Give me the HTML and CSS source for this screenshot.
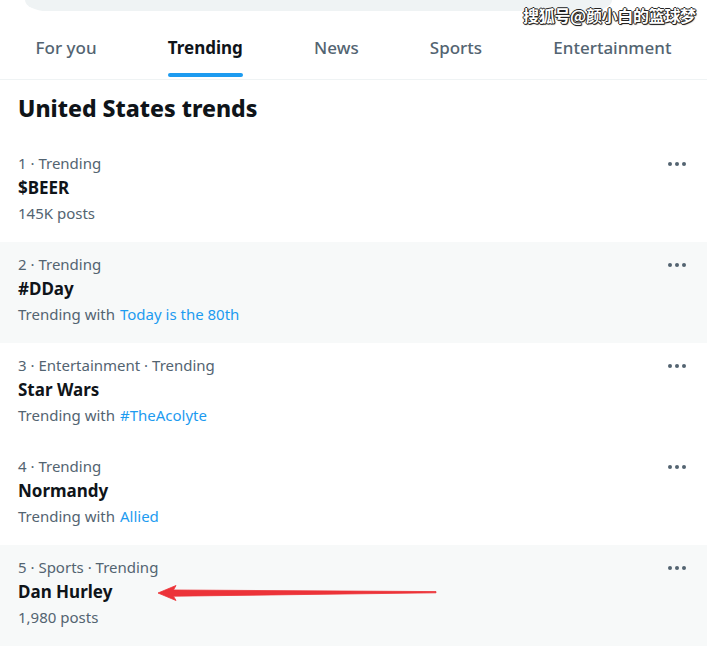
FILE: index.html
```html
<!DOCTYPE html>
<html>
<head>
<meta charset="utf-8">
<link rel="stylesheet" href="styles.css">
</head>
<body>
<div class="page">
  <div class="top">
    <div class="search"></div>
    <div class="watermark">搜狐号@颜小白的篮球梦</div>
  </div>
  <nav class="tabs">
    <div class="tab"><span>For you</span></div>
    <div class="tab active"><span>Trending</span></div>
    <div class="tab"><span>News</span></div>
    <div class="tab"><span>Sports</span></div>
    <div class="tab"><span>Entertainment</span></div>
  </nav>
  <h1 class="heading">United States trends</h1>
  <div class="trends">
    <div class="trend">
      <div class="info">
        <div class="meta">1 · Trending</div>
        <div class="title">$BEER</div>
        <div class="sub">145K posts</div>
      </div>
      <div class="more"><i></i><i></i><i></i></div>
    </div>
    <div class="trend hover">
      <div class="info">
        <div class="meta">2 · Trending</div>
        <div class="title">#DDay</div>
        <div class="sub">Trending with <a class="link">Today is the 80th</a></div>
      </div>
      <div class="more"><i></i><i></i><i></i></div>
    </div>
    <div class="trend">
      <div class="info">
        <div class="meta">3 · Entertainment · Trending</div>
        <div class="title">Star Wars</div>
        <div class="sub">Trending with <a class="link">#TheAcolyte</a></div>
      </div>
      <div class="more"><i></i><i></i><i></i></div>
    </div>
    <div class="trend">
      <div class="info">
        <div class="meta">4 · Trending</div>
        <div class="title">Normandy</div>
        <div class="sub">Trending with <a class="link">Allied</a></div>
      </div>
      <div class="more"><i></i><i></i><i></i></div>
    </div>
    <div class="trend hover last">
      <div class="info">
        <div class="meta">5 · Sports · Trending</div>
        <div class="title">Dan Hurley</div>
        <div class="sub">1,980 posts</div>
      </div>
      <div class="more"><i></i><i></i><i></i></div>
      <svg class="arrow" width="282" height="20" viewBox="0 0 282 20">
        <polygon points="0,10 18,2.5 15.5,7 278,8.6 278,9.8 15.5,13.2 18,17.5" fill="#ec3339" stroke="#ec3339" stroke-width="0.8" stroke-linejoin="round"/>
      </svg>
    </div>
  </div>
</div>
</body>
</html>
```
FILE: styles.css
```css
* { box-sizing: border-box; }
html, body { margin: 0; padding: 0; background: #fff; }
body {
  font-family: "Noto Sans", "Liberation Sans", sans-serif;
  color: #0f1419;
  width: 707px;
  overflow: hidden;
}
.page { width: 707px; }
.top { height: 26px; position: relative; }
.search {
  margin: 0 95px 0 25px;
  height: 11px;
  background: #eff3f4;
  border-bottom-left-radius: 22px 11px;
  border-bottom-right-radius: 22px 11px;
}
.watermark {
  position: absolute;
  left: 523px;
  top: 5px;
  font-family: "Noto Sans CJK SC", sans-serif;
  font-size: 16px;
  line-height: 20px;
  font-weight: 700;
  color: #fff;
  letter-spacing: -0.3px;
  text-shadow: 1px 0 0 #222, -1px 0 0 #222, 0 1px 0 #222, 0 -1px 0 #222, 1px 1px 1px #222;
}
.tabs {
  display: flex;
  height: 54px;
  border-bottom: 1px solid #eff3f4;
}
.tab {
  flex: 1 1 auto;
  display: flex;
  justify-content: center;
  position: relative;
  font-size: 17px;
  font-weight: 500;
  color: #536471;
  padding-top: 10px;
  line-height: 24px;
}
.tab span { position: relative; display: inline-block; height: 100%; }
.tab.active { color: #0f1419; font-weight: 700; }
.tab.active span::after {
  content: "";
  position: absolute;
  left: 0; right: 0;
  bottom: 2px;
  height: 4px;
  border-radius: 2px;
  background: #1d9bf0;
}
.heading {
  margin: 0;
  padding: 14px 18px 0;
  height: 61px;
  font-size: 23px;
  line-height: 28px;
  font-weight: 800;
}
.trend {
  display: flex;
  justify-content: space-between;
  height: 101px;
  padding: 12px 16px 0 18px;
  position: relative;
}
.trend.hover { background: #f7f9f9; }
.meta, .sub {
  font-size: 15px;
  line-height: 20px;
  color: #536471;
}
.title {
  font-size: 17px;
  line-height: 24px;
  font-weight: 700;
  margin: 3px 0;
}
.link { color: #1d9bf0; margin-left: 1px; }
.more {
  display: flex;
  gap: 3px;
  padding-top: 9px;
  padding-right: 5px;
  height: 20px;
}
.more i {
  display: block;
  width: 4px;
  height: 4px;
  border-radius: 50%;
  background: #536471;
}
.arrow {
  position: absolute;
  left: 158px;
  top: 38px;
}
```
